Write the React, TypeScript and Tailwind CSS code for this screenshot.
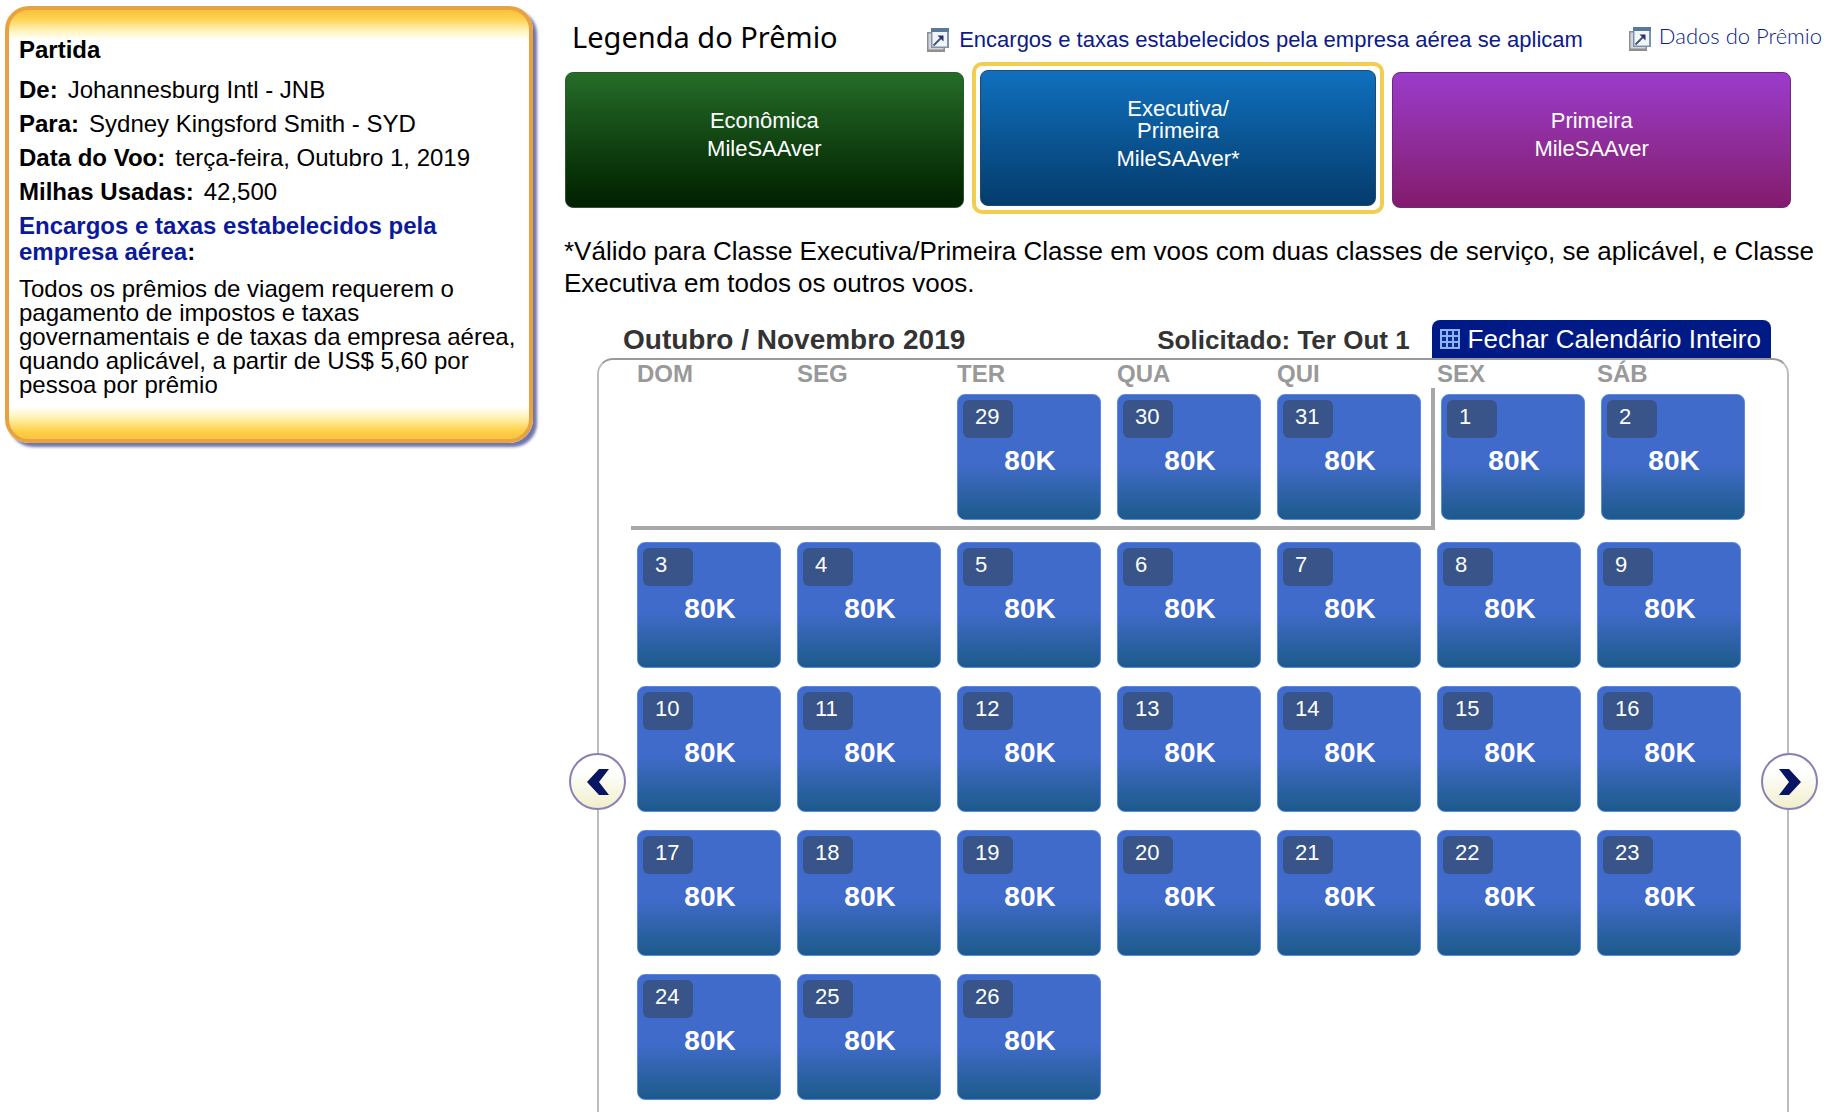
import React from "react";

const weekdays = ["DOM", "SEG", "TER", "QUA", "QUI", "SEX", "SÁB"];

const firstWeek: (number | null)[] = [null, null, 29, 30, 31, 1, 2];

const weeks: (number | null)[][] = [
  [3, 4, 5, 6, 7, 8, 9],
  [10, 11, 12, 13, 14, 15, 16],
  [17, 18, 19, 20, 21, 22, 23],
  [24, 25, 26, null, null, null, null],
];

const flight = [
  { label: "De:", value: "Johannesburg Intl - JNB" },
  { label: "Para:", value: "Sydney Kingsford Smith - SYD" },
  { label: "Data do Voo:", value: "terça-feira, Outubro 1, 2019" },
  { label: "Milhas Usadas:", value: "42,500" },
];

function PopupIcon({ className = "" }: { className?: string }) {
  return (
    <svg viewBox="0 0 22 24" className={`h-6 w-[22px] shrink-0 ${className}`} aria-hidden="true">
      <rect x="0" y="4" width="18" height="20" fill="#8e8e8e" />
      <rect x="1.5" y="5.5" width="15" height="16" fill="#d4d4d4" />
      <rect x="4" y="0" width="18" height="20" fill="#7b93ad" />
      <rect x="4" y="0" width="18" height="4" fill="#567a9e" />
      <rect x="5.500" y="4" width="14.500" height="14.500" fill="#f1f5fa" />
      <path d="M6.500 17.500 14 10" stroke="#46506f" strokeWidth="1.800" fill="none" />
      <path d="M10.500 7.500h6v6z" fill="#27336b" />
    </svg>
  );
}

function GridIcon() {
  return (
    <svg viewBox="0 0 20 20" className="h-5 w-5 shrink-0" aria-hidden="true">
      <rect width="20" height="20" fill="#8fb4f5" />
      {[2, 8, 14].map((y) =>
        [2, 8, 14].map((x) => <rect key={`${x}-${y}`} x={x} y={y} width="4" height="4" fill="#0b2a92" />)
      )}
    </svg>
  );
}

function ArrowButton({ direction, className }: { direction: "left" | "right"; className: string }) {
  return (
    <button
      type="button"
      aria-label={direction === "left" ? "Anterior" : "Próximo"}
      className={`absolute top-[393px] flex size-[57px] items-center justify-center rounded-full border-2 border-[#8a80b4] bg-linear-to-b from-white from-30% to-[#f1eecb] ${className}`}
    >
      <svg viewBox="0 0 22 26" className="h-[26px] w-[22px]" aria-hidden="true">
        {direction === "left" ? (
          <path d="M12 0h10L12 13l10 13H12L0 13z" fill="#0a1464" />
        ) : (
          <path d="M10 0H0L10 13 0 26H10L22 13z" fill="#0a1464" />
        )}
      </svg>
    </button>
  );
}

function DayTile({ day }: { day: number }) {
  return (
    <button
      type="button"
      className="flex h-[126px] w-full flex-col rounded-lg border border-[#5b8ae0] bg-linear-to-b from-[#406bca] from-55% to-[#1c5a8a] p-[5px] text-white"
    >
      <span className="h-[38px] w-[50px] rounded-md bg-[#385488] pl-3 text-left text-[22px] leading-[33px]">{day}</span>
      <span className="w-full pl-0.5 text-center text-[28px] font-bold leading-[46px]">80K</span>
    </button>
  );
}

function FlightPanel() {
  return (
    <aside className="mt-1.5 ml-[5px] w-[528px] shrink-0 rounded-3xl border-4 border-[#e8a340] bg-[linear-gradient(to_bottom,#f8c23e_0px,#ffd04c_8px,#fff6c4_22px,#ffffff_30px,#ffffff_calc(100%-32px),#fff3b8_calc(100%-22px),#fdd048_calc(100%-8px),#f9c440_100%)] pt-[23px] pr-[10px] pb-[42px] pl-[10px] text-2xl text-black shadow-[4px_4px_3px_#7076ad]">
      <h2 className="mb-1.5 font-bold leading-[34px]">Partida</h2>
      <dl>
        {flight.map((row) => (
          <div key={row.label} className="flex gap-2.5 leading-[34px]">
            <dt className="font-bold">{row.label}</dt>
            <dd>{row.value}</dd>
          </div>
        ))}
      </dl>
      <p className="mt-1 font-bold leading-[26px]">
        <a href="#encargos" className="text-[#0b1a9c]">Encargos e taxas estabelecidos pela empresa aérea</a>:
      </p>
      <p className="mt-3 leading-6">
        Todos os prêmios de viagem requerem o pagamento de impostos e taxas governamentais e de taxas da empresa aérea,
        quando aplicável, a partir de US$ 5,60 por pessoa por prêmio
      </p>
    </aside>
  );
}

function Legend() {
  return (
    <section aria-labelledby="legenda">
      <header className="flex h-[62px] items-start pt-6">
        <h1 id="legenda" className="pl-2 font-['Noto_Sans',sans-serif] text-[29px] leading-[26px] text-black">
          Legenda do Prêmio
        </h1>
        <a href="#taxas" className="ml-auto flex items-center gap-2.5 text-[22px] leading-8 text-[#0b1a8c]">
          <PopupIcon />
          Encargos e taxas estabelecidos pela empresa aérea se aplicam
        </a>
        <a
          href="#dados"
          className="ml-[46px] flex items-start gap-2 font-['Lato',sans-serif] text-[22px] font-light leading-6 text-[#0b1a8c]"
        >
          <PopupIcon className="mt-[3px]" />
          Dados do Prêmio
        </a>
      </header>
      <div className="mr-[31px] flex items-start gap-2 pl-px text-[22px] leading-[22px] text-white">
        <button
          type="button"
          className="mt-2.5 flex h-[136px] flex-1 flex-col items-center justify-center rounded-lg border border-[#2d5a2d] bg-linear-to-b from-[#266d28] to-[#022002] pb-2"
        >
          <span>Econômica</span>
          <span className="mt-[3px] leading-7">MileSAAver</span>
        </button>
        <div className="flex-1 rounded-[10px] border-4 border-[#f3cd50] p-1">
          <button
            type="button"
            aria-pressed="true"
            className="flex h-[136px] w-full flex-col items-center justify-center rounded-lg border border-[#1c4a75] bg-linear-to-b from-[#1070be] to-[#053c6c] pb-1.5"
          >
            <span>
              Executiva/
              <br />
              Primeira
            </span>
            <span className="mt-[3px] leading-7">MileSAAver*</span>
          </button>
        </div>
        <button
          type="button"
          className="mt-2.5 flex h-[136px] flex-1 flex-col items-center justify-center rounded-lg border border-[#6b2a78] bg-linear-to-b from-[#9b3bcc] to-[#831a6c] pb-2"
        >
          <span>Primeira</span>
          <span className="mt-[3px] leading-7">MileSAAver</span>
        </button>
      </div>
      <p className="mt-[21px] text-[26px] leading-8 text-black">
        *Válido para Classe Executiva/Primeira Classe em voos com duas classes de serviço, se aplicável, e Classe
        Executiva em todos os outros voos.
      </p>
    </section>
  );
}

function Calendar() {
  return (
    <section className="mt-[21px] mr-[33px] ml-[33px]" aria-labelledby="mes">
      <header className="flex h-[38px] items-start pr-[18px] pl-[26px] text-[26px] leading-10 text-[#333333]">
        <h2 id="mes" className="text-[28px] font-bold leading-10">Outubro / Novembro 2019</h2>
        <p className="mr-[22px] ml-auto font-bold">Solicitado: Ter Out 1</p>
        <button
          type="button"
          className="flex h-[38px] items-center gap-2 rounded-t-lg bg-[#001a85] pr-2.5 pl-2 leading-[38px] text-white"
        >
          <GridIcon />
          Fechar Calendário Inteiro
        </button>
      </header>
      <div className="relative rounded-t-2xl border-x-2 border-t-2 border-x-[#bdbdbd] border-t-[#999999] pr-9 pb-2 pl-8">
        <table className="w-full table-fixed border-separate border-spacing-0">
          <thead>
            <tr>
              {weekdays.map((name) => (
                <th key={name} scope="col" className="pl-1.5 text-left text-2xl font-bold leading-7 text-[#999999]">
                  {name}
                </th>
              ))}
            </tr>
          </thead>
          <tbody>
            <tr>
              {firstWeek.map((day, i) => {
                const cell =
                  i < 5
                    ? "border-b-4 border-[#a8a8a8] pt-1.5 pr-2.5 pb-1.5 pl-1.5"
                    : i === 5
                      ? "border-l-4 border-[#a8a8a8] pt-1.5 pr-1.5 pb-2.5 pl-1.5"
                      : "pt-1.5 pr-1.5 pb-2.5 pl-2.5";
                return (
                  <td key={i} className={cell}>
                    {day !== null && <DayTile day={day} />}
                  </td>
                );
              })}
            </tr>
            {weeks.map((week, w) => (
              <tr key={w}>
                {week.map((day, i) => (
                  <td key={i} className="pt-3 pr-2.5 pb-1.5 pl-1.5">
                    {day !== null && <DayTile day={day} />}
                  </td>
                ))}
              </tr>
            ))}
          </tbody>
        </table>
        <ArrowButton direction="left" className="-left-[30px]" />
        <ArrowButton direction="right" className="-right-[31px]" />
      </div>
    </section>
  );
}

export default function App() {
  return (
    <div className="flex min-h-screen items-start gap-[31px] bg-white font-['Liberation_Sans',Arial,sans-serif]">
      <FlightPanel />
      <main className="min-w-0 flex-1 pr-3.5">
        <Legend />
        <Calendar />
      </main>
    </div>
  );
}
